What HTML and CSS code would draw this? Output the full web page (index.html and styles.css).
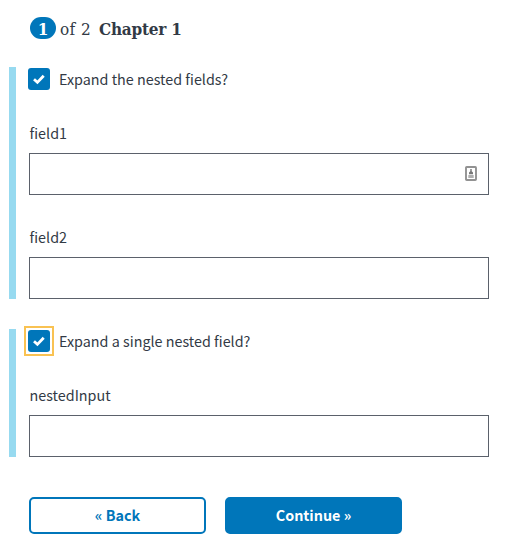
FILE: index.html
```
<!DOCTYPE html>
<html lang="en">
<head>
<meta charset="utf-8">
<title>Chapter 1</title>
<link rel="stylesheet" href="styles.css">
</head>
<body>
<form class="form">
  <h1 class="heading"><span class="step">1</span><span class="of">of 2</span><span class="chapter">Chapter 1</span></h1>
  <section class="group">
    <div class="check"><span class="box"><svg viewBox="0 0 22 22"><path d="M6 11.3 9.4 14.4 15.7 7.8"/></svg></span><span>Expand the nested fields?</span></div>
    <div class="field">
      <label class="label" for="f1">field1</label>
      <div class="control">
        <input class="input" id="f1" type="text">
        <svg class="autofill" viewBox="0 0 12 15"><rect x="1" y="1" width="10" height="13" rx=".7"/><path class="person" d="M5.3 3h1.4v2.2L8 6.4v1.8H4V6.4l1.3-1.2z"/><path class="lines" d="M3.3 9h5.4v3H3.3z"/></svg>
      </div>
    </div>
    <div class="field">
      <label class="label" for="f2">field2</label>
      <div class="control"><input class="input" id="f2" type="text"></div>
    </div>
  </section>
  <section class="group">
    <div class="check"><span class="box focused"><svg viewBox="0 0 22 22"><path d="M6 11.3 9.4 14.4 15.7 7.8"/></svg></span><span>Expand a single nested field?</span></div>
    <div class="field">
      <label class="label" for="f3">nestedInput</label>
      <div class="control"><input class="input" id="f3" type="text"></div>
    </div>
  </section>
  <div class="actions">
    <button class="btn outline" type="button">« Back</button>
    <button class="btn" type="button">Continue »</button>
  </div>
</form>
</body>
</html>
```
FILE: styles.css
```
* { box-sizing: border-box; }
body {
  margin: 0;
  background: #fff;
  color: #323a45;
  font-family: "Noto Sans CJK SC", "Noto Sans", sans-serif;
  font-size: 14.35px;
  line-height: 21px;
}
.form { padding: 17px 26px 0 9px; }
.heading {
  display: flex;
  align-items: center;
  height: 22px;
  margin: 0 0 28px 21px;
  font-family: "DejaVu Serif Condensed", "DejaVu Serif", serif;
  font-stretch: condensed;
  font-size: 17px;
  line-height: 24px;
}
.step {
  width: 26px;
  height: 22px;
  border-radius: 11px;
  background: #0076ba;
  color: #fff;
  text-align: center;
}
.of { margin: 1px 0 0 4px; font-weight: 400; letter-spacing: 0.4px; white-space: pre; }
.chapter { margin: 1px 0 0 8px; letter-spacing: -0.25px; white-space: pre; }
.group {
  border-left: 7px solid #97daf0;
  padding: 1px 0 0 13px;
  margin-bottom: 30px;
}
.check { display: flex; height: 22px; gap: 9px; margin-left: -1px; }
.box { position: relative; width: 22px; height: 22px; border-radius: 3px; background: #0076ba; }
.box svg { display: block; fill: none; stroke: #fff; stroke-width: 2.8; }
.focused::after {
  content: "";
  position: absolute;
  inset: -4px;
  border: 2px solid #f9c252;
}
.field { padding-top: 32px; }
.label { display: block; height: 22px; margin-left: 0.5px; }
.control { position: relative; height: 42px; margin-top: 9px; }
.field + .field { padding-top: 31px; }
.input {
  display: block;
  width: 460px;
  height: 42px;
  border: 1px solid #5b616b;
  border-radius: 0;
  background: #fff;
}
.autofill { position: absolute; left: 436px; top: 13px; width: 12px; height: 15px; }
.autofill rect { fill: #fff; stroke: #929292; stroke-width: 1.9; }
.person { fill: #777; }
.lines { fill: #b0b0b0; }
.actions { display: flex; gap: 19px; margin: 40px 0 0 20px; }
.btn {
  width: 177px;
  height: 37px;
  padding: 0 0 2px;
  border: 2px solid #0076ba;
  border-radius: 5px;
  background: #0076ba;
  color: #fff;
  font: 700 14.35px/22px "Noto Sans CJK SC", "Noto Sans", sans-serif;
}
.outline { background: #fff; color: #0076ba; }
```
